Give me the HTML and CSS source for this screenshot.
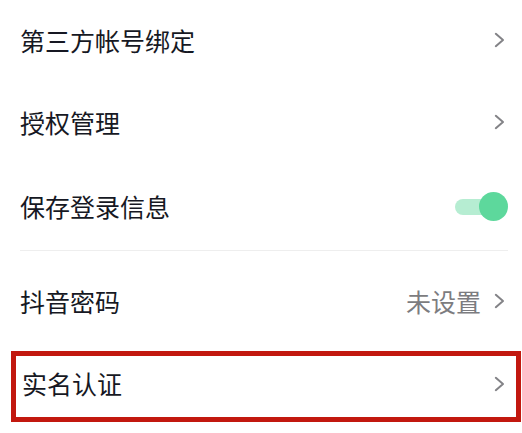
FILE: index.html
```html
<!DOCTYPE html>
<html lang="zh">
<head>
<meta charset="utf-8">
<link rel="stylesheet" href="styles.css">
</head>
<body>
<div class="list">
  <div class="row r1">
    <span class="label">第三方帐号绑定</span>
    <svg class="chev" viewBox="0 0 11 16"><path d="M1.8 1.8 L9 8 L1.8 14.2"/></svg>
  </div>
  <div class="row r2">
    <span class="label">授权管理</span>
    <svg class="chev" viewBox="0 0 11 16"><path d="M1.8 1.8 L9 8 L1.8 14.2"/></svg>
  </div>
  <div class="row r3">
    <span class="label">保存登录信息</span>
    <div class="toggle"><div class="track"></div><div class="knob"></div></div>
  </div>
  <div class="divider"></div>
  <div class="row r4">
    <span class="label">抖音密码</span>
    <div class="right">
      <span class="value">未设置</span>
      <svg class="chev" viewBox="0 0 11 16"><path d="M1.8 1.8 L9 8 L1.8 14.2"/></svg>
    </div>
  </div>
  <div class="row r5 highlight">
    <span class="label">实名认证</span>
    <svg class="chev" viewBox="0 0 11 16"><path d="M1.8 1.8 L9 8 L1.8 14.2"/></svg>
  </div>
</div>
</body>
</html>
```
FILE: styles.css
```css
html, body {
  margin: 0;
  padding: 0;
  background: #ffffff;
}
body {
  width: 522px;
  height: 433px;
  overflow: hidden;
  font-family: "Noto Sans CJK SC", "Noto Sans", sans-serif;
}
.list {
  display: flex;
  flex-direction: column;
}
.row {
  display: flex;
  align-items: center;
  justify-content: space-between;
  padding: 0 17px 0 20px;
  box-sizing: border-box;
}
.label {
  font-size: 25px;
  line-height: 30px;
  color: #161823;
}
.r1 { height: 80px; }
.r2 { height: 84px; }
.r3 { height: 84px; padding-right: 14px; }
.r4 { height: 100px; }
.divider {
  height: 1px;
  background: #eeeeee;
  margin: 2px 14px 0 20px;
}
.chev {
  width: 11px;
  height: 16px;
  fill: none;
  stroke: #838387;
  stroke-width: 2;
  stroke-linecap: round;
  stroke-linejoin: round;
}
.right {
  display: flex;
  align-items: center;
  gap: 13px;
}
.value {
  font-size: 25px;
  line-height: 30px;
  color: #7c7c80;
}
.toggle {
  position: relative;
  width: 53px;
  height: 29px;
}
.track {
  position: absolute;
  left: 0;
  top: 7px;
  width: 46px;
  height: 16px;
  border-radius: 8px;
  background: #b6edd2;
}
.knob {
  position: absolute;
  right: 0;
  top: 0;
  width: 29px;
  height: 29px;
  border-radius: 50%;
  background: #5dd89c;
}
.highlight {
  height: 71px;
  margin: 0 1px 0 11px;
  border: 5px solid #c2180f;
  padding: 0 11px 8px 6px;
}
.highlight .chev {
  margin-top: 2px;
}
```
